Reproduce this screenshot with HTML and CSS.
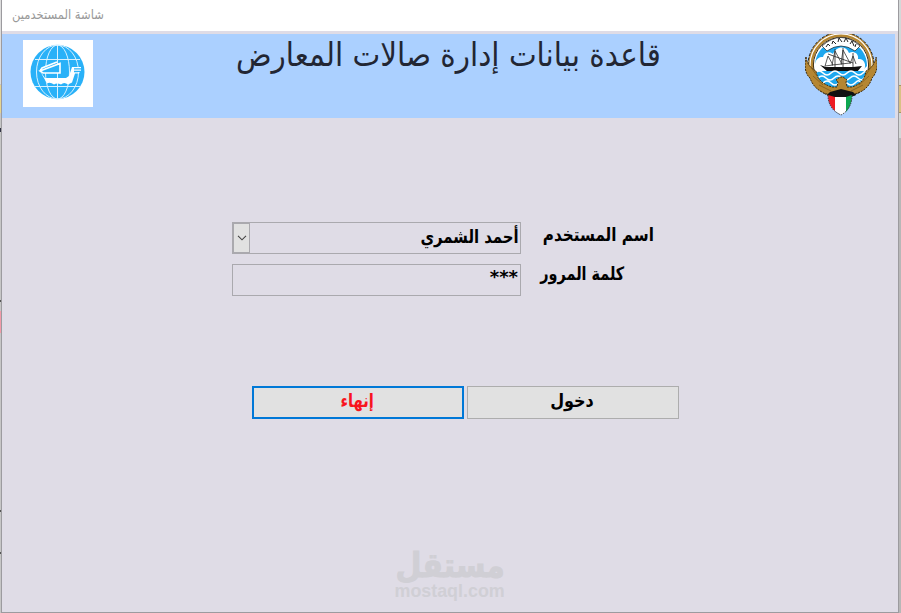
FILE: index.html
```html
<!DOCTYPE html>
<html lang="ar" dir="rtl">
<head>
  <meta charset="UTF-8">
  <meta name="viewport" content="width=device-width, initial-scale=1.0">
  <title>شاشة المستخدمين</title>
  <link rel="stylesheet" href="styles.css">
</head>
<body>
  <div class="edge edge-left">
    <i class="mark grey"></i><i class="mark yellow"></i><i class="mark dark"></i><i class="mark pink"></i>
    <i class="dot d1"></i><i class="dot d2"></i><i class="dot d3"></i>
  </div>

  <div class="window">
    <div class="titlebar"><span class="fit">شاشة المستخدمين</span></div>

    <div class="header">
      <svg class="emblem" width="72" height="82" viewBox="0 0 72 82">
        <circle cx="36" cy="31" r="29" fill="#fff"/>
        <circle cx="36" cy="31" r="30.5" fill="none" stroke="#b58632" stroke-width="5"/>
        <circle cx="36" cy="31" r="33" fill="none" stroke="#222" stroke-width="1" stroke-dasharray="3 1.5"/>
        <circle cx="36" cy="31" r="31" fill="none" stroke="#fff" stroke-width="1.2"/>
        <circle cx="36" cy="31" r="27.6" fill="none" stroke="#3d2c10" stroke-width="1"/>
        <path d="M10 32C10 18 20 7 36 7s26 11 26 25l-4 4-44 0z" fill="#1ea7ee"/>
        <path d="M17 12Q36-5 55 12L50 17Q36 7 22 17z" fill="#fff" stroke="#222" stroke-width=".7"/>
        <path d="M21 13l2-3 2 2M27 10l1-3 3 3M33 8l1-4 3 4M39 8l2-4 2 4M45 10l2-3 2 5M50 13l1-3" fill="none" stroke="#222" stroke-width="1"/>
        <path d="M11 36c-3-7 1-14 7-13 1-5 7-6 10-3 3-8 13-9 16-1 6-3 10 2 9 6 6-1 9 6 6 11H13z" fill="#fff"/>
        <path d="M20 32l3-10 5 9zM27 31l3-14 7 13zM36 30l2-14 7 13zM45 30l3-8 3 8" fill="#fff" stroke="#333" stroke-width=".8"/>
        <path d="M30 15v18M38 14v19M48 19v14M23 20l25 9" stroke="#222" stroke-width=".8"/>
        <path d="M15 31l6 2h27l9-1-5 6H23z" fill="#111"/>
        <path d="M9 37h54c-4 12-14 19-27 19S13 49 9 37z" fill="#1ea7ee"/>
        <path d="M10 39q4-4 8 0t8 0 8 0 8 0 8 0 8 0 4-1M13 44q4-4 8 0t8 0 8 0 8 0 8 0 7-1M18 49q4-4 8 0t8 0 8 0 8 0 5-1" fill="none" stroke="#fff" stroke-width="1.6"/>
        <path d="M1 23q1 9 10 14c1 8 6 13 16 16h5l1-5-2-2 4-3h3l4 3-1 2 1 5h5c9-3 13-8 14-16q9-5 10-14c3 9 0 17-4 21-2 7-7 12-12 14-6 3-9 2-12 3h-14c-3-1-8 0-12-3-6-3-10-8-12-14C0 40-1 31 1 23z" fill="#b58632" stroke="#3d2c10" stroke-width="1" stroke-dasharray="2 1"/>
        <path d="M5 32l7 10m-4 0l10 9m-4 0l12 6M67 32l-7 10m4 0l-10 9m4 0l-12 6" stroke="#8a6421"/>
        <path d="M25 58l11-3 12 3 3 3-8 3H29l-7-3z" fill="#111"/>
        <path d="M23 61l7 2v14q-7-6-7-16z" fill="#ed1c24"/>
        <path d="M30 63h11v15l-5 3-6-4z" fill="#fff"/>
        <path d="M41 63l6-2q0 10-6 17z" fill="#0da750"/>
        <path d="M23 61q0 14 13 20 11-6 11-20" fill="none" stroke="#333" stroke-dasharray="1.500 1"/>
      </svg>

      <h1><span class="fit">قاعدة بيانات إدارة صالات المعارض</span></h1>

      <svg class="logo" width="70" height="67" viewBox="0 0 70 67">
        <rect width="70" height="67" fill="#fff"/>
        <circle cx="34.500" cy="32" r="27" fill="#29b1f8"/>
        <g fill="none" stroke="#d8f1ff" stroke-width="1">
          <path d="M34.500 5v54M12 19.500h45M12 46.500h45"/>
          <ellipse cx="34.500" cy="32" rx="12" ry="27"/>
          <ellipse cx="34.500" cy="32" rx="21" ry="27"/>
        </g>
        <path d="M49 27h9v5h-9z" fill="#29b1f8"/>
        <path d="M17 31l5 7h21l3-2 3-9h9v1.200h-7v1.400h7v1.200h-7v1.400h6l-1 1.300h-4l-3 9-4 2q-4-3-7 0-4-2-7 0-4-3-7-1z" fill="#fff"/>
        <path d="M17 31L37 23.500v9.500H20zM17 31l2-3 15-6" fill="#29b1f8" stroke="#fff" stroke-width="1.600"/>
      </svg>
    </div>

    <form class="login">
      <div class="row">
        <label class="user-label"><span class="fit">اسم المستخدم</span></label>
        <div class="field">
          <span class="fit">أحمد الشمري</span>
          <div class="arrow">
            <svg width="10" height="6" viewBox="0 0 10 6"><path d="M1 .8l4 4 4-4" fill="none" stroke="#444" stroke-width="1.100"/></svg>
          </div>
        </div>
      </div>
      <div class="row">
        <label class="pass-label"><span class="fit">كلمة المرور</span></label>
        <div class="field stars">***</div>
      </div>
      <div class="buttons">
        <button type="button"><span class="fit">دخول</span></button>
        <button type="button" class="exit"><span class="fit">إنهاء</span></button>
      </div>
    </form>

    <div class="watermark">
      <div class="wm-ar"><span class="fit">مستقل</span></div>
      <div class="wm-en"><span class="fit">mostaql.com</span></div>
    </div>
  </div>

  <div class="edge edge-right"><i class="mark tan"></i></div>
</body>
</html>
```
FILE: styles.css
```css
* {
  box-sizing: border-box;
}
body {
  margin: 0;
  height: 613px;
  display: flex;
  direction: ltr;
  overflow: hidden;
  font-family: "DejaVu Sans", sans-serif;
  background: #bbb;
  color: #000;
}
.edge {
  position: relative;
  flex: none;
  background: #c6c6c6;
}
.edge-left {
  width: 1px;
}
.edge-right {
  width: 2px;
  background: linear-gradient(#d4d8d8 0 138px, #b7b7b7 138px);
}
.mark, .dot {
  position: absolute;
  left: 0;
  width: 100%;
}
.grey { top: 0; height: 84px; background: #ddd; }
.yellow { top: 85px; height: 28px; background: #e6d590; }
.dark { top: 128px; height: 4px; background: #334; }
.pink { top: 311px; height: 22px; background: #f29aa8; }
.tan { top: 85px; height: 28px; background: #d9c184; border: solid #a89464; border-width: 1px 0; }
.dot { height: 2px; background: #555; }
.d1 { top: 300px; }
.d2 { top: 510px; }
.d3 { top: 552px; }
.window {
  width: 898px;
  height: 613px;
  flex: none;
  direction: rtl;
  display: flex;
  flex-direction: column;
  background: #dfdce6;
  border: solid #9c9b9f;
  border-width: 0 1px 1px;
}
.fit {
  display: inline-block;
  white-space: nowrap;
}
.titlebar {
  height: 31px;
  padding: 8px 0 0 10px;
  text-align: left;
  direction: ltr;
  background: #fff;
  color: #999;
  font-size: 11px;
  line-height: 16px;
}
.titlebar .fit {
  transform: scale(1.05, 1.15);
  transform-origin: left center;
}
.header {
  height: 84px;
  margin: 3px 3px 0 0;
  display: flex;
  justify-content: space-between;
  align-items: flex-start;
  padding: 0 18px 0 21px;
  background: #abd0ff;
}
h1 {
  margin: 0;
  font-weight: normal;
  font-size: 30px;
  line-height: 42px;
  color: #222633;
}
h1 .fit {
  transform: translateX(-1px) scale(.982, 1.08);
}
.logo {
  margin-top: 6px;
}
.login {
  margin: 104px 219px 0 230px;
}
.row {
  display: flex;
  justify-content: flex-end;
  height: 32px;
  margin-bottom: 10px;
}
label {
  width: 158px;
  flex: none;
  padding-right: 25px;
  text-align: right;
  font-weight: bold;
  font-size: 16px;
  line-height: 26px;
}
label .fit {
  transform: scale(.95, 1.15);
  transform-origin: right center;
}
.pass-label {
  padding-right: 55px;
  line-height: 20px;
}
.pass-label .fit {
  transform: scale(.9, 1.15);
}
.field {
  width: 289px;
  flex: none;
  display: flex;
  justify-content: space-between;
  border: 1px solid #aaa9ae;
  padding-right: 1px;
  font-weight: bold;
  font-size: 16px;
  line-height: 27px;
}
.field .fit {
  transform: scale(.93, 1.15);
  transform-origin: right center;
}
.arrow {
  width: 17px;
  height: 30px;
  display: flex;
  align-items: center;
  justify-content: center;
  background: #e1e1e1;
  border: 1px solid #aaa9ae;
}
.stars {
  padding-right: 2px;
  font-size: 18px;
  line-height: 23px;
}
.buttons {
  display: flex;
  gap: 3px;
  margin-top: 90px;
}
button {
  width: 212px;
  height: 33px;
  padding: 0 2px 5px 0;
  border: 1px solid #adadad;
  background: #e1e1e1;
  font: bold 16px "DejaVu Sans", sans-serif;
  color: #000;
}
button .fit {
  transform: scale(1, 1.15);
}
.exit {
  border: 2px solid #0078d7;
  color: #f8141e;
}
.exit .fit {
  transform: scale(.92, 1.15);
}
.watermark {
  margin-top: 129px;
  text-align: center;
  color: #d0cfd5;
  font-weight: bold;
}
.wm-ar {
  height: 34px;
  font-size: 34px;
  line-height: 34px;
}
.wm-ar .fit {
  height: 32px;
  transform: scaleX(.88);
  -webkit-text-stroke: 1px #d0cfd5;
}
.wm-en {
  font: bold 19px/18px "Liberation Sans", Arial, sans-serif;
}
.wm-en .fit {
  transform: scaleX(.94);
}
```
